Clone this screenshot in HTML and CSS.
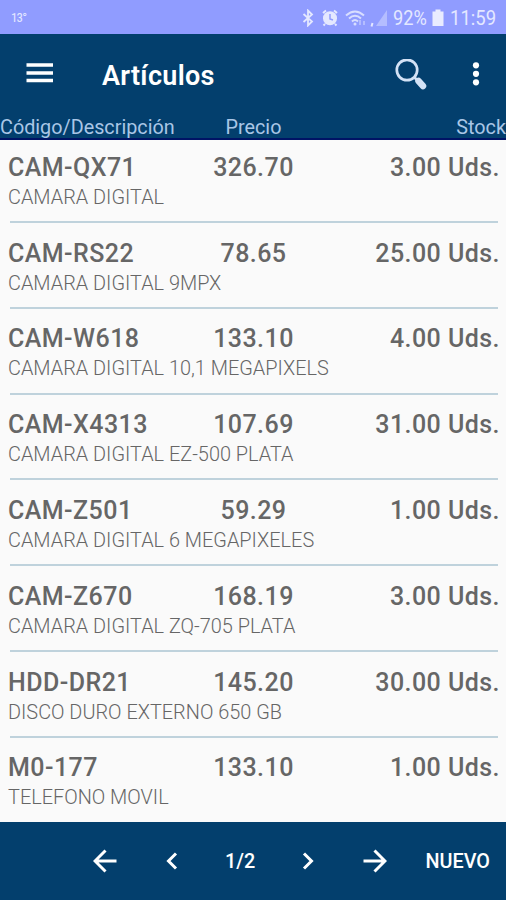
FILE: index.html
```
<!DOCTYPE html>
<html lang="es">
<head>
  <meta charset="UTF-8">
  <meta name="viewport" content="width=device-width, initial-scale=1.0">
  <title>Artículos</title>
  <link rel="stylesheet" href="styles.css">
</head>
<body>
  <div class="status-bar">
    <span class="temp">13°</span>
    <div class="status-icons">
      <svg class="bluetooth" width="12" height="18" viewBox="0 0 12 18"><path d="M1.500 5 L10 12.500 L6 16.500 V1.500 L10 5.500 L1.500 13"/></svg>
      <svg class="alarm" width="18" height="18" viewBox="0 0 18 18"><path d="M2 4 L5 1.500 M16 4 L13 1.500 M4 15 L2.500 16.500 M14 15 L15.500 16.500"/><circle cx="9" cy="9.300" r="7"/><path class="hands" d="M9 5 V10 L12 11"/></svg>
      <svg class="wifi" width="23" height="18" viewBox="0 0 23 18"><path d="M1 6.500 Q10 -1.500 19 6.500 M4 9.500 Q10 4 16 9.500 M7 12.500 Q10 9.500 13 12.500"/><circle cx="10" cy="15" r="1.500"/><path class="faint" d="M15 11 V16 M19 12 V16"/></svg>
      <svg class="signal" width="18" height="18" viewBox="0 0 18 18"><path d="M17 1 V17 H6 Z"/><path class="comma" d="M2.500 14 L1.500 17.500"/></svg>
      <span class="percent">92%</span>
      <svg class="battery" width="12" height="18" viewBox="0 0 12 18"><path d="M3.500 0.500 H8.500 V2.500 H11.500 V17 H0.500 V2.500 H3.500 Z"/></svg>
      <span class="clock">11:59</span>
    </div>
  </div>

  <header class="toolbar">
    <svg class="menu" width="28" height="22" viewBox="0 0 28 22"><path d="M0.500 3 H27 M0.500 11 H27 M0.500 18.500 H27"/></svg>
    <h1>Artículos</h1>
    <svg class="search" width="32" height="32" viewBox="0 0 32 32"><circle cx="12" cy="11" r="10.200"/><path class="neck" d="M19 18 L23 22"/><path class="handle" d="M23.500 22 L28 27"/></svg>
    <svg class="more" width="8" height="26" viewBox="0 0 8 26"><circle cx="4" cy="4.300" r="3.100"/><circle cx="4" cy="12.800" r="3.100"/><circle cx="4" cy="21.300" r="3.100"/></svg>
  </header>

  <div class="columns">
    <span>Código/Descripción</span>
    <span class="center">Precio</span>
    <span class="right">Stock</span>
  </div>

  <main class="list">
    <div class="item">
      <div class="line"><span>CAM-QX71</span><span class="center">326.70</span><span class="right">3.00 Uds.</span></div>
      <p>CAMARA DIGITAL</p>
    </div>
    <div class="item">
      <div class="line"><span>CAM-RS22</span><span class="center">78.65</span><span class="right">25.00 Uds.</span></div>
      <p>CAMARA DIGITAL 9MPX</p>
    </div>
    <div class="item">
      <div class="line"><span>CAM-W618</span><span class="center">133.10</span><span class="right">4.00 Uds.</span></div>
      <p>CAMARA DIGITAL 10,1 MEGAPIXELS</p>
    </div>
    <div class="item">
      <div class="line"><span>CAM-X4313</span><span class="center">107.69</span><span class="right">31.00 Uds.</span></div>
      <p>CAMARA DIGITAL EZ-500 PLATA</p>
    </div>
    <div class="item">
      <div class="line"><span>CAM-Z501</span><span class="center">59.29</span><span class="right">1.00 Uds.</span></div>
      <p>CAMARA DIGITAL 6 MEGAPIXELES</p>
    </div>
    <div class="item">
      <div class="line"><span>CAM-Z670</span><span class="center">168.19</span><span class="right">3.00 Uds.</span></div>
      <p>CAMARA DIGITAL ZQ-705 PLATA</p>
    </div>
    <div class="item">
      <div class="line"><span>HDD-DR21</span><span class="center">145.20</span><span class="right">30.00 Uds.</span></div>
      <p>DISCO DURO EXTERNO 650 GB</p>
    </div>
    <div class="item">
      <div class="line"><span>M0-177</span><span class="center">133.10</span><span class="right">1.00 Uds.</span></div>
      <p>TELEFONO MOVIL</p>
    </div>
  </main>

  <footer class="pager">
    <svg width="24" height="24" viewBox="0 0 24 24"><path d="M12.500 1.500 L2 12 L12.500 22.500 M2 12 H23.500"/></svg>
    <svg width="12" height="18" viewBox="0 0 12 18"><path d="M10 1.500 L2.500 9 L10 16.500"/></svg>
    <span class="page">1/2</span>
    <svg width="12" height="18" viewBox="0 0 12 18"><path d="M2 1.500 L9.500 9 L2 16.500"/></svg>
    <svg width="24" height="24" viewBox="0 0 24 24"><path d="M11.500 1.500 L22 12 L11.500 22.500 M22 12 H0.500"/></svg>
    <span class="new">NUEVO</span>
  </footer>
</body>
</html>
```
FILE: styles.css
```
* {
  margin: 0;
  padding: 0;
  box-sizing: border-box;
}
html, body {
  width: 100%;
  height: 100%;
  overflow: hidden;
}
body {
  display: flex;
  flex-direction: column;
  font-family: Roboto, sans-serif;
  background: #fafafa;
}
svg {
  display: block;
  flex-shrink: 0;
  fill: none;
}
.status-bar {
  height: 34px;
  flex-shrink: 0;
  display: flex;
  justify-content: space-between;
  align-items: center;
  padding: 1px 10px 0 11px;
  background: #909cff;
  color: #e4e8ff;
}
.temp {
  font-size: 13px;
  font-stretch: condensed;
  letter-spacing: -0.8px;
}
.status-icons {
  display: flex;
  align-items: center;
}
.bluetooth {
  stroke: #e4e8ff;
  stroke-width: 1.8;
  margin-right: 7px;
}
.alarm {
  stroke: #e4e8ff;
  stroke-width: 2;
  margin-right: 6px;
}
.alarm circle {
  fill: #e4e8ff;
  stroke: none;
}
.alarm .hands {
  stroke: #909cff;
  stroke-width: 1.5;
}
.wifi {
  stroke: #d8deff;
  stroke-width: 2;
  margin-right: 2px;
}
.wifi circle {
  fill: #d8deff;
  stroke: none;
}
.wifi .faint {
  stroke: #b4bdff;
}
.signal {
  margin-right: 5px;
}
.signal path {
  fill: #b4bdff;
}
.signal .comma {
  stroke: #e4e8ff;
  stroke-width: 2;
}
.percent {
  width: 35px;
  font-size: 20px;
  transform: scaleX(0.91);
  transform-origin: left;
}
.battery {
  fill: #e9ecff;
  margin: 0 6px 0 4px;
}
.clock {
  width: 46px;
  font-size: 21px;
  transform: scaleX(0.88);
  transform-origin: left;
}
.toolbar {
  height: 82px;
  flex-shrink: 0;
  display: flex;
  align-items: center;
  padding: 0 26px;
  background: #033f6d;
  color: #fff;
}
.menu {
  stroke: #fff;
  stroke-width: 3.4;
  margin-top: -4px;
}
.toolbar h1 {
  flex: 1;
  margin: 2px 0 0 48px;
  font-size: 27px;
  font-weight: 600;
  letter-spacing: 0.3px;
}
.search {
  stroke: #d3e2f6;
  stroke-width: 2.7;
  margin-right: 45px;
}
.search .handle {
  stroke-width: 6.5;
  stroke-linecap: round;
}
.more {
  fill: #fff;
  margin-top: -3px;
}
.columns {
  height: 24px;
  flex-shrink: 0;
  display: grid;
  grid-template-columns: 196px 115px 1fr;
  background: #033f6d;
  border-bottom: 2px solid #001365;
  color: #a9c6e6;
  font-size: 19.8px;
  line-height: 23px;
}
.center {
  text-align: center;
}
.right {
  text-align: right;
}
.list {
  flex: 1;
  min-height: 0;
  overflow: hidden;
}
.item {
  height: 85.8px;
  margin: 0 8px 0 10px;
  padding-top: 15.6px;
  border-bottom: 2px solid #bfd2dc;
  color: #666;
}
.item:first-child {
  height: 83px;
  padding-top: 12.8px;
}
.item:last-child {
  border-bottom: none;
}
.line {
  display: grid;
  grid-template-columns: 188px 115px 1fr;
  margin: 0 -2px;
  font-size: 25px;
  font-weight: 500;
  line-height: 30px;
  letter-spacing: 0.45px;
}
.item p {
  margin: 0 0 0 -2px;
  font-size: 19.9px;
  font-weight: 300;
  line-height: 30px;
}
.pager {
  height: 78px;
  flex-shrink: 0;
  display: flex;
  align-items: center;
  padding: 0 16px 0 93px;
  background: #033f6d;
  color: #fff;
  font-size: 19.8px;
  font-weight: 500;
}
.pager svg {
  stroke: #fff;
  stroke-width: 3;
}
.pager svg + svg {
  margin-left: 49px;
}
.page {
  width: 32px;
  margin: 1px 45px 0 47px;
}
.new {
  margin: 1px 0 0 auto;
}
```
